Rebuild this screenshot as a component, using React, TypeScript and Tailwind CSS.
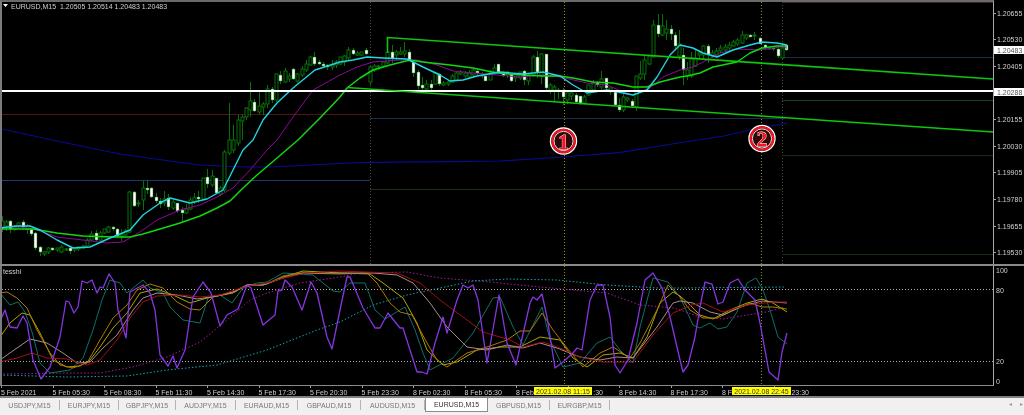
const candles: number[][] = [
[2,216,221,229,232,0],[6,220,222,226,231,0],[10,220,221,229,233,1],[14,225,226,229,231,0],[18,222,223,226,228,0],[23,220,222,227,229,1],[27,224,226,229,234,0],[31,228,229,234,236,1],[35,232,233,248,250,1],[40,246,247,252,256,1],[44,251,252,254,256,0],[48,247,248,252,254,0],[52,247,248,250,251,1],[57,248,248,250,252,0],[61,245,247,252,253,0],[66,248,249,250,251,0],[70,247,248,251,254,1],[74,248,248,250,252,0],[78,246,247,249,251,0],[83,245,246,248,249,0],[87,238,240,246,248,0],[91,231,234,240,241,0],[96,230,233,240,241,1],[100,231,233,240,241,0],[104,229,229,233,234,0],[108,226,227,232,233,0],[113,226,227,229,231,1],[117,228,229,236,238,1],[121,229,235,237,241,0],[125,229,231,235,236,0],[129,191,192,232,233,0],[134,191,192,206,207,1],[138,200,203,204,207,0],[143,181,188,200,210,0],[147,180,188,190,194,1],[151,187,188,197,198,1],[156,193,197,201,203,1],[160,198,201,204,208,1],[164,191,199,203,206,0],[168,194,198,207,210,1],[173,200,202,208,210,0],[177,203,203,211,213,1],[182,207,210,213,222,1],[186,204,209,213,214,0],[190,197,200,209,210,0],[194,193,198,202,204,0],[198,191,197,199,203,1],[203,178,178,199,200,0],[207,169,177,184,188,1],[212,170,176,185,187,0],[216,178,178,193,194,1],[220,186,188,194,196,0],[224,150,152,190,192,0],[229,103,140,153,155,0],[233,125,140,150,153,0],[238,115,120,143,146,0],[242,115,117,121,140,0],[246,107,108,117,120,0],[250,82,101,110,117,0],[254,99,102,111,112,1],[259,91,106,112,114,0],[263,102,104,107,115,0],[267,85,89,104,108,0],[272,87,89,100,103,1],[276,74,74,100,102,0],[280,71,75,81,84,1],[285,68,71,82,83,0],[289,73,76,79,82,0],[293,68,69,79,80,1],[297,73,74,81,83,0],[302,66,69,75,77,0],[306,60,64,70,72,0],[310,56,57,65,66,0],[314,52,57,64,66,1],[319,60,62,64,65,1],[323,62,64,66,67,1],[327,64,65,67,70,1],[332,60,65,67,70,0],[336,60,62,65,68,0],[340,57,57,64,65,0],[344,55,56,62,66,0],[348,47,50,58,60,0],[353,48,50,54,55,1],[357,51,53,55,56,0],[361,52,52,55,56,0],[366,48,50,54,55,1],[370,65,67,82,85,0],[374,64,66,70,72,0],[378,65,66,67,70,0],[383,61,62,66,68,0],[387,50,52,63,64,0],[392,45,52,59,63,1],[396,50,52,55,60,0],[400,47,52,54,55,0],[404,42,51,54,57,0],[409,49,52,61,61,1],[413,60,62,73,77,1],[418,70,72,86,89,1],[422,77,85,88,90,1],[426,80,84,89,90,0],[431,80,84,88,92,1],[435,72,73,84,85,0],[439,73,74,84,86,1],[443,81,83,85,86,0],[448,80,82,84,86,0],[452,74,76,82,83,0],[456,72,73,80,81,0],[460,70,72,74,75,0],[465,71,73,76,78,0],[469,70,73,77,78,0],[473,68,70,75,78,0],[477,69,71,73,75,1],[482,72,75,76,78,0],[485,75,76,81,81,1],[490,70,73,80,80,0],[494,64,68,72,75,0],[498,64,64,72,73,1],[503,71,72,76,77,1],[507,71,72,75,78,0],[511,74,74,81,82,1],[515,73,74,78,82,0],[520,72,72,78,80,0],[524,70,71,80,85,1],[528,74,75,81,85,0],[533,55,57,75,77,0],[537,51,57,72,78,1],[541,53,54,76,84,0],[546,54,54,88,91,1],[550,83,85,90,94,0],[554,85,87,90,102,0],[558,88,90,91,99,0],[563,88,90,97,105,1],[567,93,93,100,104,0],[571,92,93,96,100,0],[576,93,95,102,104,1],[580,96,96,103,105,1],[584,95,97,103,104,0],[588,85,85,95,96,0],[593,80,83,90,92,0],[597,81,82,85,87,1],[601,71,79,87,92,0],[606,78,78,88,91,1],[610,88,88,92,95,0],[615,90,92,105,106,1],[619,98,105,110,112,1],[623,94,97,110,112,0],[627,97,98,100,102,0],[632,99,101,106,107,1],[636,76,76,107,111,0],[640,61,74,78,80,0],[644,55,60,74,80,0],[649,55,56,64,65,0],[653,20,25,57,57,0],[658,14,25,34,37,1],[662,14,26,35,36,0],[666,20,29,33,40,0],[671,25,29,34,40,1],[675,32,35,46,50,1],[679,30,44,56,60,0],[683,48,55,70,85,1],[687,62,70,76,80,0],[691,52,58,76,78,0],[695,50,58,66,67,0],[699,50,53,55,58,0],[703,45,46,55,60,0],[708,44,46,55,63,1],[712,50,53,56,58,0],[716,48,51,55,56,0],[720,45,48,51,53,0],[725,44,47,50,52,0],[729,42,45,48,50,0],[733,40,42,46,47,0],[737,38,40,44,46,0],[742,31,35,43,44,0],[746,34,35,38,40,0],[750,34,35,37,37,1],[754,32,35,36,40,0],[760,37,38,44,44,1],[765,44,45,48,50,1],[769,46,48,49,50,0],[773,47,48,49,51,1],[778,47,49,56,58,1],[782,43,48,58,59,0],[786,44,45,50,51,1],
];

const maGreen = "0,229 33,229 57,233 83,236 113,237 130,237 143,234 160,229 180,223 200,216 217,208 230,201 243,188 257,175 277,158 298,140 320,118 340,97 347,88 360,78 373,70 390,65 410,60 423,62 450,65 473,68 497,73 523,75 543,76 560,76 573,78 593,82 613,83 633,87 647,87 660,82 680,77 687,76 700,73 713,67 737,62 750,53 762,48 777,46 787,46";
const maCyan = "0,228 17,226 30,226 40,230 57,240 73,248 90,247 110,238 130,230 143,215 160,203 170,198 190,203 207,199 223,190 233,170 243,150 253,140 263,120 277,103 293,88 315,70 340,62 353,60 367,57 383,58 407,59 423,67 440,75 450,81 463,80 477,76 500,72 523,74 543,72 560,76 573,85 587,93 607,90 623,93 633,95 647,90 657,77 670,55 680,45 693,48 703,53 717,57 733,50 750,45 762,42 777,43 787,45";
const maPurple = "0,227 20,227 37,230 57,237 83,240 107,243 123,242 140,232 157,220 180,210 200,205 217,197 233,188 250,170 267,150 277,140 293,117 313,90 340,75 357,67 373,62 400,60 417,60 437,65 453,71 473,73 497,75 520,77 543,75 560,77 587,83 607,85 623,92 633,95 650,88 663,77 680,70 693,67 707,60 720,53 737,49 760,50 780,47 787,48";
const maNavy = "2,129 52,140 120,154 170,161 200,165 245,167 270,167 300,165.5 340,163.5 370,162.3 449,161.7 501,161 563,157 619,152.7 672,144 724,136 750,130 787,123";

const indPurple = "0,321 5,310 10,327 17,328 23,316 27,323 33,360 41,379 50,367 60,337 66,301 69,302 74,313 78,307 82,281 87,283 92,280 97,293 100,287 103,288 109,274 115,283 118,310 126,338 130,292 143,285 150,293 155,310 160,355 168,366 173,356 177,368 185,350 193,297 203,282 211,293 220,326 227,315 238,309 247,285 251,288 263,325 275,315 278,291 282,290 285,280 292,287 302,310 311,282 317,293 327,337 332,349 340,310 347,277 350,277 363,308 375,328 380,328 388,313 400,328 403,328 417,372 422,372 427,374 435,343 443,317 447,333 457,300 463,285 468,288 473,285 478,300 487,363 499,295 507,343 516,365 530,303 533,297 537,300 542,294 547,317 555,368 563,362 573,353 577,348 582,350 590,300 597,285 603,285 610,317 615,365 620,373 628,360 637,323 645,280 653,273 662,288 670,317 680,360 683,372 688,365 695,337 700,307 705,282 712,284 718,304 723,302 730,283 738,279 745,290 755,300 760,323 769,372 778,380 782,352 787,333";
const indTeal = "0,293 10,305 18,302 25,312 32,332 40,363 50,373 70,370 83,358 93,330 102,300 110,280 120,283 127,293 143,280 150,288 163,293 170,307 183,320 200,323 208,298 220,295 232,303 243,288 257,283 267,282 283,273 313,275 323,283 333,291 340,292 350,283 365,283 375,310 385,319 395,313 405,307 415,330 423,353 430,370 453,358 473,333 493,298 500,297 513,327 523,345 542,307 550,340 563,367 580,363 597,343 610,337 620,350 633,363 640,327 653,278 668,282 680,297 693,325 700,328 710,323 718,329 727,327 737,312 747,283 756,278 763,290 770,310 778,337 787,344";
const indOrange = "0,293 7,292 17,298 27,308 37,330 50,353 60,365 73,368 87,363 100,340 113,318 127,305 137,290 150,284 163,288 177,302 190,309 200,310 213,297 233,292 247,285 267,284 283,276 300,273 340,274 367,273 377,283 390,303 400,312 412,315 427,343 437,360 447,367 467,353 487,347 507,340 520,331 530,331 542,313 553,330 567,348 583,367 600,353 613,347 630,358 640,343 657,310 668,285 680,297 690,310 703,318 717,318 730,312 750,303 762,307 773,307 787,309";
const indYellow = "0,337 10,323 22,313 30,315 40,333 53,360 67,367 80,366 90,360 100,347 113,328 127,313 140,293 157,289 173,295 190,303 207,298 233,293 247,285 263,285 283,277 303,271 340,273 370,274 383,283 403,298 417,323 427,350 443,365 457,362 477,350 500,347 520,347 540,337 560,340 573,358 587,367 603,355 620,353 633,358 647,337 660,303 673,292 680,296 688,303 700,315 713,319 730,310 747,303 762,299 773,303 787,312";
const indRose = "0,360 17,348 30,339 47,343 63,353 77,363 90,362 103,348 117,335 133,310 143,298 157,293 177,295 197,299 217,296 233,292 247,285 263,285 283,278 303,273 340,273 373,273 397,275 413,283 430,303 447,327 467,347 487,350 507,345 523,348 540,343 557,348 580,357 600,360 617,357 633,358 657,327 673,303 680,301 693,303 710,312 723,315 740,307 762,301 787,303";
const indRed = "0,362 17,358 32,353 47,358 67,359 87,365 100,360 117,340 130,318 143,302 157,296 180,295 200,297 220,295 247,286 267,283 283,278 307,273 340,271 367,272 397,273 420,283 440,300 463,317 483,332 510,340 523,347 543,342 560,348 580,357 603,362 633,362 653,335 673,313 680,310 692,305 703,303 723,312 747,305 773,302 787,302";
const indMagenta = "0,374 67,373 100,373 133,367 167,357 200,342 233,315 250,300 267,293 300,283 340,277 360,273 407,272 440,278 490,282 540,287 573,290 607,293 640,305 673,308 680,310 700,317 723,319 747,315 767,312 785,307";
const indCyan = "0,375 67,377 127,376 167,370 217,365 267,350 317,330 340,322 373,305 407,295 440,288 473,281 507,279 557,280 607,285 657,288 680,288 785,287";

const prices = ["1.20655", "1.20530", "1.20405", "1.20280", "1.20155", "1.20030", "1.19905", "1.19780", "1.19655", "1.19530"];
const times: [string, string][] = [
  ["5 Feb 2021", ""], ["5 Feb 05:30", ""], ["5 Feb 08:30", ""], ["5 Feb 11:30", ""], ["5 Feb 14:30", ""], ["5 Feb 17:30", ""], ["5 Feb 20:30", ""], ["5 Feb 23:30", ""],
  ["8 Feb 02:30", ""], ["8 Feb 05:30", ""], ["8 Feb", ""], ["", ":30"], ["8 Feb 14:30", ""], ["8 Feb 17:30", ""], ["8 F", ""], ["", "23:30"],
];
const tabs: [string, string][] = [
  ["USDJPY,M15", "w-[60px]"], ["EURJPY,M15", "w-[59px]"], ["GBPJPY,M15", "w-[57px]"], ["AUDJPY,M15", "w-[60px]"], ["EURAUD,M15", "w-[62px]"],
  ["GBPAUD,M15", "w-[63px]"], ["AUDUSD,M15", "w-[64px]"], ["EURUSD,M15", "w-[63px]"], ["GBPUSD,M15", "w-[62px]"], ["EURGBP,M15", "w-[60px]"],
];

function Badge({ cx, cy, n }: { cx: number; cy: number; n: string }) {
  return (
    <g>
      <circle cx={cx} cy={cy} r={13} fill="#000" stroke="#ffffff" strokeWidth={1.4} />
      <circle cx={cx} cy={cy} r={11.3} fill="none" stroke="#ff1020" strokeWidth={2} />
      <circle cx={cx} cy={cy} r={9.6} fill="#300808" stroke="#ffe8e8" strokeWidth={1} />
      <text x={cx} y={cy + 7.5} textAnchor="middle" fontSize={21} fontWeight={700} fill="#ff1020" stroke="#ffffff" strokeWidth={0.8} paintOrder="stroke" fontFamily="'Liberation Serif', serif">{n}</text>
    </g>
  );
}

function Line({ pts, color, w = 1, dash }: { pts: string; color: string; w?: number; dash?: string }) {
  return <polyline points={pts} fill="none" stroke={color} strokeWidth={w} strokeDasharray={dash} strokeLinejoin="round" />;
}

export default function App() {
  return (
    <div className="w-[1024px] h-[415px] bg-black flex flex-col overflow-hidden blur-[0.3px] text-[7px] leading-none text-[#d0d0d0] font-['Liberation_Sans',sans-serif]">
      <div className="flex h-[264px] shrink-0">
        <div className="relative w-[994px] shrink-0 border-t-2 border-l-2 border-r border-t-[#6a6a6a] border-l-[#7c7c7c] border-r-[#a8a8a8]">
          <svg width={991} height={262} viewBox="2 2 991 262" className="block">
            <line x1={370.5} y1={2} x2={370.5} y2={264} stroke="#4c4c30" strokeDasharray="1 2" />
            <line x1={782.5} y1={2} x2={782.5} y2={264} stroke="#4c4c3c" strokeDasharray="1 2" />
            <line x1={564.5} y1={2} x2={564.5} y2={264} stroke="#909020" strokeDasharray="1 2" />
            <line x1={761.5} y1={2} x2={761.5} y2={264} stroke="#909020" strokeDasharray="1 2" />
            <line x1={782} y1={2.5} x2={993} y2={2.5} stroke="#4a2020" />
            <line x1={2} y1={114.5} x2={370} y2={114.5} stroke="#551515" />
            <line x1={370} y1={118.5} x2={785} y2={118.5} stroke="#1c2c55" />
            <line x1={2} y1={180.5} x2={370} y2={180.5} stroke="#1f3a70" />
            <line x1={370} y1={189.5} x2={782} y2={189.5} stroke="#1c3018" />
            <line x1={782} y1={57.5} x2={993} y2={57.5} stroke="#1c2c40" />
            <line x1={782} y1={100.5} x2={993} y2={100.5} stroke="#164416" />
            <line x1={782} y1={155.5} x2={993} y2={155.5} stroke="#162c16" />
            <line x1={782} y1={254.5} x2={993} y2={254.5} stroke="#162c16" />
            <Line pts={maNavy} color="#0a0a90" w={1.2} />
            {candles.map(([x, hi, top, bot, lo, white]) => (
              <g key={x}>
                <line x1={x + 0.5} y1={hi} x2={x + 0.5} y2={lo} stroke="#087008" />
                <rect x={x - 1} y={top} width={3} height={Math.max(bot - top, 1)} fill={white ? "#ffffff" : "#000"} stroke="#087008" strokeWidth={white ? 0.5 : 1} />
              </g>
            ))}
            <Line pts={maPurple} color="#8c0a96" w={1} />
            <Line pts={maGreen} color="#10d810" w={1.5} />
            <Line pts={maCyan} color="#22d4e4" w={1.4} />
            <line x1={2} y1={91} x2={993} y2={91} stroke="#ffffff" strokeWidth={2} />
            <polyline points="387.5,53 387.5,37.5 993,79" fill="none" stroke="#0cc80c" strokeWidth={1.6} />
            <line x1={347} y1={87.5} x2={993} y2={132} stroke="#0cc80c" strokeWidth={1.6} />
            <Badge cx={563.5} cy={141} n="1" />
            <Badge cx={762} cy={138.5} n="2" />
            <path d="M3 4 h5 l-2.5 3 z" fill="#fff" />
            <text x={11} y={8.5} fontSize={7} fill="#d0d0d0" xmlSpace="preserve">EURUSD,M15  1.20505 1.20514 1.20483 1.20483</text>
          </svg>
        </div>
        <div className="relative flex-1 flex flex-col">
          {prices.map((p) => (
            <div key={p} className="h-[26.6px] shrink-0 flex items-center gap-[1px]">
              <span className="w-[2px] h-px bg-[#a8a8a8]" />
              <span>{p === "1.20280" ? "" : p}</span>
            </div>
          ))}
          <div className="absolute left-0 top-[46px] w-[30px] h-[8px] bg-white text-[#555] flex items-center pl-[3px]">1.20483</div>
          <div className="absolute left-0 top-[88px] w-[30px] h-[8px] bg-white text-[#555] flex items-center pl-[3px]">1.20288</div>
        </div>
      </div>
      <div className="h-[2px] shrink-0 bg-[#8a8a8a]" />
      <div className="flex h-[120px] shrink-0">
        <div className="w-[994px] shrink-0 border-l-2 border-b border-r border-l-[#7c7c7c] border-b-[#8a8a8a] border-r-[#a8a8a8]">
          <svg width={991} height={119} viewBox="2 266 991 119" className="block">
            <line x1={564.5} y1={266} x2={564.5} y2={385} stroke="#909020" strokeDasharray="1 2" />
            <line x1={761.5} y1={266} x2={761.5} y2={385} stroke="#909020" strokeDasharray="1 2" />
            <line x1={2} y1={289.5} x2={993} y2={289.5} stroke="#b0b0b0" strokeDasharray="1 2" />
            <line x1={2} y1={361.5} x2={993} y2={361.5} stroke="#b0b0b0" strokeDasharray="1 2" />
            <Line pts={indMagenta} color="#a01ca0" dash="1.5 2" />
            <Line pts={indCyan} color="#14a8a8" dash="1.5 2" />
            <Line pts={indTeal} color="#0e7068" />
            <Line pts={indYellow} color="#b0a400" />
            <Line pts={indOrange} color="#b07800" />
            <Line pts={indRose} color="#a88c8c" />
            <Line pts={indRed} color="#a01010" />
            <Line pts={indPurple} color="#8636e0" w={1.3} />
            <text x={3} y={274} fontSize={7} fill="#d0d0d0">tesshi</text>
          </svg>
        </div>
        <div className="relative flex-1">
          <div className="absolute left-[2px] top-[0px] h-[8px] flex items-center">100</div>
          <div className="absolute left-[2px] top-[20px] h-[8px] flex items-center">80</div>
          <div className="absolute left-[2px] top-[91px] h-[8px] flex items-center">20</div>
          <div className="absolute left-[2px] top-[111px] h-[8px] flex items-center">0</div>
        </div>
      </div>
      <div className="relative flex h-[10px] shrink-0 pl-[1px]">
        {times.map(([t, tail], i) => (
          <div key={i} className="relative w-[51.5px] shrink-0 whitespace-nowrap">
            <span className="absolute left-0 top-0 w-px h-[2px] bg-[#a0a0a0]" />
            {t ? <span className="block pt-[3px]">{t}</span> : <span className="block w-[35.5px] pt-[3px] text-right">{tail}</span>}
          </div>
        ))}
        <div className="absolute left-[534px] top-[1px] w-[58px] h-[8px] bg-[#ffff00] text-[#333] flex items-center justify-center">2021.02.08 11:15</div>
        <div className="absolute left-[732px] top-[1px] w-[59px] h-[8px] bg-[#ffff00] text-[#333] flex items-center justify-center">2021.02.08 22:45</div>
      </div>
      <div className="relative flex-1 flex border-t-2 border-[#808080] bg-[#f0f0f0] text-[#777]">
        {tabs.map(([t, w]) =>
          t === "EURUSD,M15" ? (
            <div key={t} className={`${w} h-[14px] flex items-center justify-center bg-white border-x border-b border-[#8c8c8c] text-[#333]`}>{t}</div>
          ) : (
            <div key={t} className={`${w} h-[14px] flex items-center justify-center`}>
              <span className="flex-1 text-center">{t}</span>
              <span className="w-px h-[10px] bg-[#b4b4b4]" />
            </div>
          ),
        )}
        <div className="absolute right-[1px] top-[3px] flex gap-[8px] text-[6px] text-[#999]">
          <span>◂</span>
          <span>▸</span>
        </div>
      </div>
    </div>
  );
}
